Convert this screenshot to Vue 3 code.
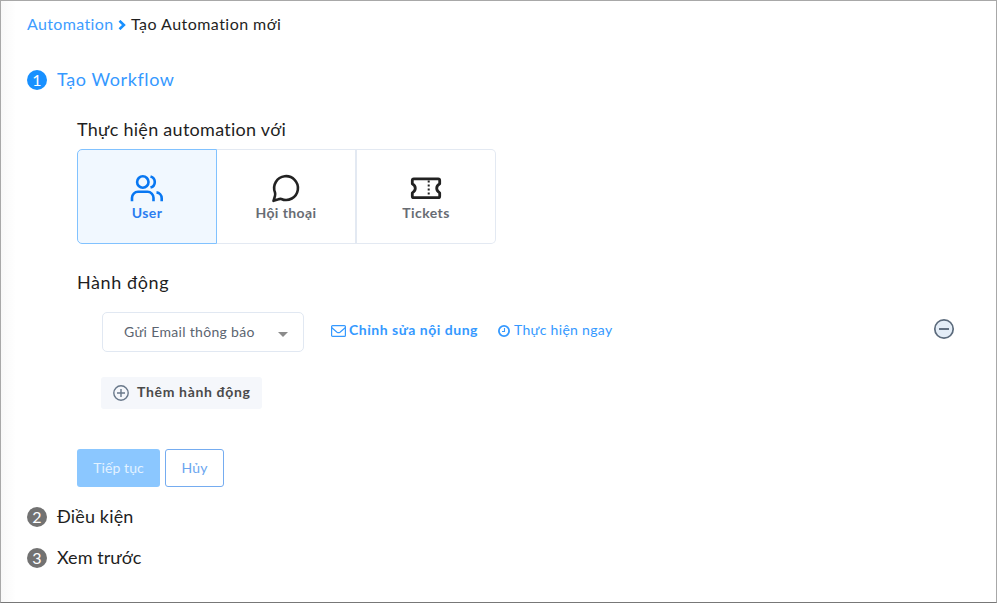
<script setup>
const types = [
  { id: 'user', label: 'User' },
  { id: 'chat', label: 'Hội thoại' },
  { id: 'ticket', label: 'Tickets' },
]
const active = 'user'
</script>

<template>
  <main class="page">
    <nav class="crumbs">
      <a class="crumb-link">Automation</a>
      <svg class="chev" viewBox="0 0 8 10"><path d="M1.500 .8 5.900 5 1.500 9.200" fill="none" stroke="#1890ff" stroke-width="2.600" /></svg>
      <span class="crumb-now">Tạo Automation mới</span>
    </nav>

    <header class="step step-on"><i class="num">1</i><span class="s1">Tạo Workflow</span></header>

    <section class="body">
      <h3 class="h-type">Thực hiện automation với</h3>
      <div class="cards">
        <div v-for="t in types" :key="t.id" class="card" :class="[t.id, { active: t.id === active }]">
          <svg v-if="t.id === 'user'" class="ico" viewBox="0 0 34 30" fill="none" stroke="currentColor" stroke-width="2.600" stroke-linecap="butt">
            <circle cx="12.800" cy="9" r="5.700" />
            <path d="M2 28.300v-3.500a6 6 0 0 1 6-6h9.500a6 6 0 0 1 6 6v3.500M20.500 3.400a5.800 5.800 0 0 1 0 11.200M26.500 19.400a5.800 5.800 0 0 1 5.200 5.800v3.100" />
          </svg>
          <svg v-else-if="t.id === 'chat'" class="ico" viewBox="0 0 34 30" fill="none" stroke="currentColor" stroke-width="2.600" stroke-linejoin="round">
            <path d="M4.500 27.800 6 22.800Q6.500 21.500 6 19.500A11.900 11.900 0 1 1 12.300 26Q11 25.600 9.500 26.300Z" />
          </svg>
          <svg v-else class="ico" viewBox="0 0 34 30" fill="none" stroke="currentColor" stroke-width="2.800" stroke-linejoin="round">
            <path d="M4.800 5.900h24.400a1.500 1.500 0 0 1 1.500 1.500v3.300q-3 1.800-3 4.600t3 4.600V23.200a1.500 1.500 0 0 1-1.500 1.500H4.800a1.500 1.500 0 0 1-1.500-1.500v-3.300q3-1.800 3-4.600t-3-4.600V7.400A1.500 1.500 0 0 1 4.800 5.900Z" />
            <path d="M19.700 7.500v16" stroke-width="2" stroke-dasharray="2 2" />
          </svg>
          <b>{{ t.label }}</b>
        </div>
      </div>

      <h3 class="h-act">Hành động</h3>
      <div class="row">
        <div class="select"><span class="sel-text">Gửi Email thông báo</span><i class="caret"></i></div>
        <a class="edit">
          <svg viewBox="0 0 15 12" fill="none" stroke="currentColor" stroke-width="1.200"><rect x=".6" y=".6" width="13.800" height="10.800" rx="1" /><path d="M.8 2.800 6 7.200q1.500 1 3 0l5.200-4.400" /></svg>
          <span>Chỉnh sửa nội dung</span>
        </a>
        <a class="now">
          <svg viewBox="0 0 12 12" fill="none" stroke="currentColor"><circle cx="6" cy="6" r="5.100" stroke-width="1.800" /><path d="M6.500 3v3.500H4" stroke-width="1.100" /></svg>
          <span>Thực hiện ngay</span>
        </a>
        <svg class="minus" viewBox="0 0 22 22"><circle cx="11" cy="11" r="9.200" fill="#e4edf7" stroke="#5c6b7c" stroke-width="1.700" /><path d="M6 11h10" stroke="#5c6b7c" stroke-width="1.900" /></svg>
      </div>

      <button class="add">
        <svg viewBox="0 0 16 16" fill="none" stroke="#69788a" stroke-width="1.400"><circle cx="8" cy="8" r="7.200" /><path d="M8 4v8M4 8h8" /></svg>
        <span>Thêm hành động</span>
      </button>

      <div class="buttons">
        <button class="next">Tiếp tục</button>
        <button class="cancel">Hủy</button>
      </div>
    </section>

    <header class="step s-two"><i class="num">2</i><span class="s2">Điều kiện</span></header>
    <header class="step s-three"><i class="num">3</i><span class="s3">Xem trước</span></header>
  </main>
</template>

<style>
body { margin: 0; background: #fff; }
</style>

<style scoped>
* { box-sizing: border-box; }
.page {
  width: 997px; height: 603px; padding: 13px 40px 0 26px; overflow: hidden;
  border: 1px solid #a8a8a8; border-bottom-color: #777;
  background: linear-gradient(90deg, #f8f8f8, #fff 15px);
  font-family: Lato, "Noto Sans", sans-serif; color: #1f1f1f;
  white-space: nowrap; font-variant-ligatures: none;
}
button { font-family: inherit; border: 0; }
svg { flex: none; display: block; }
.crumbs { display: flex; align-items: center; height: 20px; font-size: 16px; }
.crumbs a, .crumbs span { padding-bottom: 2px; }
.crumb-link { width: 87px; color: #3e9dff; letter-spacing: .36px; }
.crumb-now { letter-spacing: .46px; }
.chev { width: 8px; height: 10px; margin: 2px 5px 0 4px; }
.step { display: flex; align-items: center; height: 24px; font-size: 18px; }
.step span { padding-bottom: 2px; }
.step-on { margin-top: 34px; color: #3599ff; }
.s1 { letter-spacing: .6px; }
.s2 { letter-spacing: .15px; }
.s3 { letter-spacing: .08px; }
.num {
  display: flex; align-items: center; justify-content: center;
  width: 20px; height: 20px; margin-right: 10px; border-radius: 50%;
  background: #727272; color: #fff; font-size: 16px; font-style: normal; line-height: 20px;
}
.step-on .num { background: #1890ff; }
.body { padding-left: 50px; }
h3 { margin: 0; font-size: 18px; font-weight: 400; line-height: 22px; height: 24px; }
.h-type { margin-top: 26px; letter-spacing: .28px; }
.cards { display: flex; width: 419px; height: 95px; margin-top: 7px; }
.card {
  display: flex; flex-direction: column; align-items: center; width: 140px; padding-top: 23px;
  border: 1px solid #e3e9f2; border-left-width: 0; color: #222; background: #fff;
}
.card.chat { border-right-width: 2px; }
.card.ticket { width: 139px; border-radius: 0 5px 5px 0; }
.card.active { border: 1px solid #81c2ff; border-radius: 5px 0 0 5px; background: #f1f8ff; color: #0877f2; }
.ico { width: 34px; height: 30px; }
.card b { font-size: 14px; line-height: 20px; font-weight: 700; color: #686c73; letter-spacing: .42px; }
.card.active b { color: #2b7df0; }
.h-act { margin-top: 27px; letter-spacing: .6px; }
.row { display: flex; align-items: center; height: 40px; margin-top: 17px; padding-left: 25px; font-size: 14px; color: #3599ff; }
.select {
  display: flex; align-items: center; justify-content: space-between; width: 202px; height: 40px;
  padding: 0 15px 0 21px; border: 1px solid #e1e8f2; border-radius: 5px; background: #fff; color: #5b6470;
}
.sel-text { padding-bottom: 2px; letter-spacing: .32px; }
.caret { border: 5px solid transparent; border-top-color: #8b8b8b; border-bottom: 0; margin-top: 4px; }
.edit, .now { display: flex; align-items: center; height: 20px; margin-bottom: 3px; }
.edit span, .now span { padding-bottom: 2px; }
.edit { width: 147px; margin-left: 27px; font-weight: 700; gap: 3px; letter-spacing: .51px; }
.edit svg { width: 15px; height: 12px; }
.now { margin-left: 20px; gap: 4px; letter-spacing: .31px; }
.now svg { width: 12px; height: 12px; }
.minus { width: 22px; height: 22px; margin: 0 1px 6px auto; }
.add {
  display: flex; align-items: center; width: 161px; height: 32px; margin: 25px 0 0 24px; padding: 0 0 0 12px; gap: 8px;
  border-radius: 3px; background: #f5f7fb; color: #4a4a4a; font-size: 14px; font-weight: 700; letter-spacing: .66px;
}
.add svg { width: 16px; height: 16px; }
.add span { padding-bottom: 3px; }
.buttons { display: flex; gap: 5px; margin-top: 40px; }
.next, .cancel { height: 38px; border-radius: 3px; font-size: 14px; padding: 0 0 2px; }
.next { width: 83px; background: #8bc7ff; color: #e3f2ff; letter-spacing: .1px; }
.cancel { width: 59px; border: 1px solid #75acf0; background: #fff; color: #6aa5ef; letter-spacing: .2px; }
.s-two { margin-top: 18px; }
.s-three { margin-top: 17px; }
</style>
